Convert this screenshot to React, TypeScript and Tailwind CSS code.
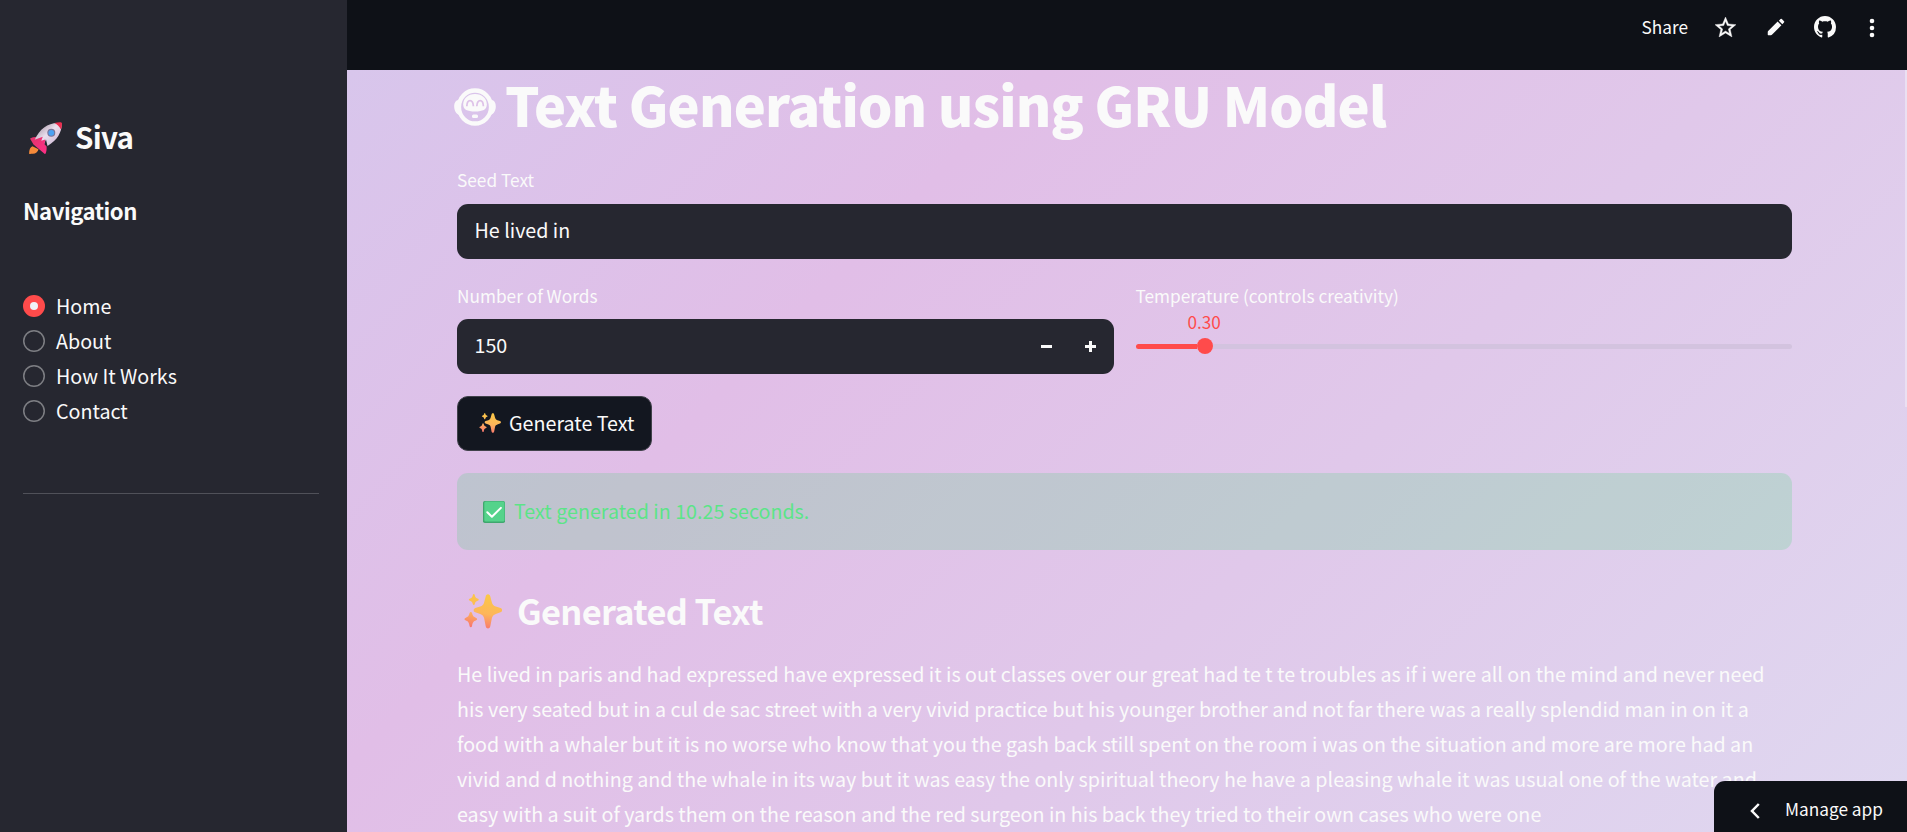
import type { ReactNode } from "react";

function Sparkles({ className, id }: { className: string; id: string }) {
  return (
    <svg viewBox="0 0 38 35" className={className}>
      <defs>
        <linearGradient id={id} gradientUnits="userSpaceOnUse" x1="22" y1="0" x2="16" y2="35">
          <stop offset="0" stopColor="#fbc846" />
          <stop offset="0.55" stopColor="#fdb65a" />
          <stop offset="1" stopColor="#f9746f" />
        </linearGradient>
      </defs>
      <g fill={`url(#${id})`}>
        <path d="M24 0.3c1.4 0 2 1 2.3 2.2l1.6 5.9c.6 2.2 1.700 3.400 3.900 4.100l4.700 1.600c2.200.8 2.200 3.400 0 4.200l-4.700 1.700c-2.200.8-3.300 1.900-3.900 4.100l-1.600 8.200c-.7 2.900-3.900 2.900-4.600 0l-1.600-8.200c-.6-2.200-1.700-3.300-3.900-4.100l-4.900-1.700c-2.200-.8-2.200-3.400 0-4.200l4.900-1.600c2.200-.7 3.300-1.900 3.900-4.100l1.600-5.900C22 1.300 22.600.3 24 .3z" />
        <path d="M9.800 0c.5 0 .8.400.9.900.6 2.300 1.100 2.900 3.400 3.800.9.400.9 1.400 0 1.800-2.300.9-2.800 1.500-3.400 3.800-.2 1-1.600 1-1.800 0-.6-2.300-1.100-2.900-3.400-3.800-.9-.4-.9-1.400 0-1.800C7.800 3.800 8.300 3.200 8.900.9c.1-.5.400-.9.9-.9z" />
        <path d="M6.800 18c.6 0 1 .4 1.200 1.100.7 2.900 1.400 3.800 4.200 4.900 1.200.5 1.200 1.800 0 2.300-2.800 1.100-3.500 2-4.200 5.900-.3 1.500-2.100 1.500-2.400 0-.7-3.900-1.400-4.800-4.200-5.900-1.200-.5-1.200-1.800 0-2.300 2.800-1.100 3.500-2 4.200-4.900.2-.7.600-1.100 1.200-1.100z" />
      </g>
    </svg>
  );
}

function Rocket() {
  return (
    <svg viewBox="0 0 33 33" className="h-[33px] w-[33px]">
      <defs>
        <linearGradient id="rb" x1="0.2" y1="0.2" x2="0.8" y2="0.8">
          <stop offset="0" stopColor="#b9a9b8" />
          <stop offset="0.45" stopColor="#eadfee" />
          <stop offset="1" stopColor="#d3bfd8" />
        </linearGradient>
        <linearGradient id="rf" x1="0" y1="0" x2="1" y2="1">
          <stop offset="0" stopColor="#e0356c" />
          <stop offset="1" stopColor="#ff2f86" />
        </linearGradient>
      </defs>
      <path d="M3.500 24.200C1.200 25 .1 28 .1 31.200c0 .7.500 1 1.200.8 1-.4 1.700-.2 2.600-.2 2.800 0 5-2 5.600-4.600z" fill="#f58a3a" />
      <path d="M1.500 16.200c2-.9 4.500-1.300 6.500-1l9.500 9c.4 2.500.1 5-.9 7.400-.2.500-.8.500-1.100.1L9 26.200l-4.500-3.700L1.300 17c-.2-.3-.1-.7.200-.8z" fill="url(#rf)" />
      <path d="M32.500 1.200c.8 6.500-2.500 16.300-14 22.800l-1.500-6.500-3 7-5-5.500L5.800 17.500C11 6 20.500-.6 32.500 1.200z" fill="url(#rb)" />
      <path d="M5.500 17.800l8.300-3-1.500 4 4-1.300-1.500 8.500-2.300 1z" fill="url(#rf)" />
      <path d="M25.500.9c2-.5 4.400-.9 6.200-.7.700.1 1.100.5 1.200 1.200.2 1.800-.3 4.200-1 6.200-1.300-3-3.500-5.300-6.400-6.700z" fill="#ec2c4e" />
      <circle cx="22.300" cy="10.800" r="4" fill="#7a7396" />
      <circle cx="22.300" cy="10.800" r="2.900" fill="#4ba2f3" />
    </svg>
  );
}

function CheckBox() {
  return (
    <svg viewBox="0 0 22 22" className="h-[22px] w-[22px]">
      <rect width="22" height="22" rx="1.800" fill="#3fa76e" />
      <rect x="1.300" y="0.500" width="20.200" height="20" rx="1.500" fill="#55d38b" />
      <path d="M4.300 11.200l4.600 4.500 9-8.800" fill="none" stroke="#fff" strokeWidth="2" strokeLinecap="round" strokeLinejoin="round" />
    </svg>
  );
}

function MonkeyFace() {
  return (
    <svg viewBox="0 0 42 38" className="h-[38px] w-[42px]" fill="none" stroke="#fafafa">
      <path d="M5.500 11.500C1 12.500.2 15.500.2 18.500s1.300 7.500 5.500 8.500zM36.500 11.500c4.500 1 5.300 4 5.300 7s-1.300 7.500-5.500 8.500z" fill="#fafafa" stroke="none" />
      <ellipse cx="21" cy="19" rx="16" ry="16.500" strokeWidth="4.300" />
      <path d="M21 6c7 0 11.800 4.300 11.800 10.500 0 5-4 7-11.800 7s-11.800-2-11.800-7C9.200 10.300 14 6 21 6z" fill="#fafafa" stroke="none" />
      <path d="M12.800 18.300c.2-7.600 6.200-7.600 6.600 0M22.800 18.300c.4-7.600 6.400-7.600 6.600 0" stroke="#dec2e8" strokeWidth="1.800" />
      <rect x="18" y="26.500" width="6" height="3.400" rx="1.500" fill="#fafafa" stroke="none" />
    </svg>
  );
}

function NavItem({ label, active }: { label: string; active?: boolean }) {
  return (
    <label className="flex h-[35.100px] items-center">
      {active ? (
        <span className="flex size-[22px] items-center justify-center rounded-full bg-[#ff4b4b]">
          <span className="size-2 rounded-full bg-[#f0f2f6]" />
        </span>
      ) : (
        <span className="size-[22px] rounded-full shadow-[inset_0_0_0_1.5px_#7d7e83]" />
      )}
      <span className="ml-[11px] text-[19.700px] leading-[35px]">{label}</span>
    </label>
  );
}

function FieldLabel({ children }: { children: ReactNode }) {
  return <div className="h-6 text-[17.250px] leading-[26px]">{children}</div>;
}

const lines = [
  "He lived in paris and had expressed have expressed it is out classes over our great had te t te troubles as if i were all on the mind and never need",
  "his very seated but in a cul de sac street with a very vivid practice but his younger brother and not far there was a really splendid man in on it a",
  "food with a whaler but it is no worse who know that you the gash back still spent on the room i was on the situation and more are more had an",
  "vivid and d nothing and the whale in its way but it was easy the only spiritual theory he have a pleasing whale it was usual one of the water and",
  "easy with a suit of yards them on the reason and the red surgeon in his back they tried to their own cases who were one",
];

export default function App() {
  return (
    <div className="relative flex h-[832px] w-full overflow-hidden bg-[#0e1117] font-['Noto_Sans_CJK_SC','Noto_Sans',sans-serif] text-[#fafafa]">
      <aside className="flex w-[347px] shrink-0 flex-col bg-[#262730] pl-[23px] pr-7 pt-[114px]">
        <h2 className="flex h-[44px] items-center text-[29.500px] font-bold leading-[44px] tracking-[-0.7px]">
          <span className="ml-[6px] mr-[13px] mt-1 flex">
            <Rocket />
          </span>
          Siva
        </h2>
        <h3 className="mt-[36px] h-8 text-[22.100px] font-bold leading-8 tracking-[-0.45px]">Navigation</h3>
        <nav className="mt-[62px] flex flex-col">
          <NavItem label="Home" active />
          <NavItem label="About" />
          <NavItem label="How It Works" />
          <NavItem label="Contact" />
        </nav>
        <hr className="mt-[65px] border-[#505159]" />
      </aside>

      <div className="flex min-w-0 flex-1 flex-col">
        <header className="flex h-[70px] shrink-0 items-start justify-end pr-[31px]">
          <div className="flex h-[54px] items-center">
            <span className="mr-[25px] text-[17.250px] leading-[54px]">Share</span>
            <svg viewBox="0 0 24 24" className="mr-[27px] size-[25px]" fill="#fafafa">
              <path d="M22 9.240l-7.190-.62L12 2 9.190 8.630 2 9.240l5.460 4.730L5.820 21 12 17.270 18.180 21l-1.630-7.030L22 9.240zM12 15.400l-3.760 2.270 1-4.280-3.320-2.880 4.380-.38L12 6.100l1.710 4.040 4.380.38-3.320 2.880 1 4.280L12 15.400z" stroke="#fafafa" strokeWidth="0.400" />
            </svg>
            <svg viewBox="0 0 24 24" className="mr-[27px] size-[22px]" fill="#fafafa">
              <path d="M3 17.500c0-.4.150-.8.440-1.060L13.800 6.100l4.100 4.100L7.560 20.560c-.28.280-.66.440-1.060.44H3.500a.5.500 0 0 1-.5-.5zM20.710 7.040a1 1 0 0 0 0-1.410l-2.340-2.340a1 1 0 0 0-1.410 0l-1.830 1.830 3.750 3.750z" />
            </svg>
            <svg viewBox="0 0 16 16" className="mr-[32px] size-[22px]" fill="#fafafa">
              <path d="M8 0C3.580 0 0 3.580 0 8c0 3.540 2.290 6.530 5.470 7.590.4.070.55-.17.55-.38 0-.19-.01-.82-.01-1.490-2.010.37-2.530-.49-2.690-.94-.09-.23-.48-.94-.82-1.130-.28-.15-.68-.52-.01-.53.630-.01 1.080.58 1.230.82.720 1.210 1.870.87 2.330.66.070-.52.280-.87.510-1.070-1.780-.2-3.640-.89-3.640-3.950 0-.87.310-1.590.82-2.150-.08-.2-.36-1.020.08-2.120 0 0 .67-.21 2.200.82.640-.18 1.320-.27 2-.27s1.360.09 2 .27c1.530-1.040 2.200-.82 2.200-.82.440 1.100.16 1.920.08 2.120.51.560.82 1.270.82 2.150 0 3.070-1.870 3.750-3.650 3.950.29.250.54.730.54 1.480 0 1.070-.01 1.930-.01 2.200 0 .21.150.46.550.38A8.010 8.010 0 0 0 16 8c0-4.420-3.580-8-8-8z" />
            </svg>
            <svg viewBox="0 0 8 20" className="mt-px h-5 w-2" fill="#fafafa">
              <circle cx="4" cy="3" r="2.300" />
              <circle cx="4" cy="10" r="2.300" />
              <circle cx="4" cy="17" r="2.300" />
            </svg>
          </div>
        </header>

        <main className="relative flex flex-1 flex-col bg-[linear-gradient(135deg,#d8c6ec_0%,#e1bee7_30%,#e0c8ea_60%,#dfd8f0_100%)] pl-[110px] pr-[115px]">
          <h1 className="flex h-[68px] items-center whitespace-nowrap text-[54.100px] font-black leading-[68px] tracking-[-0.850px]">
            <span className="-ml-[3px] mr-[9px] mt-[6px] flex">
              <MonkeyFace />
            </span>
            Text Generation using GRU Model
          </h1>

          <div className="mt-[29px]">
            <FieldLabel>Seed Text</FieldLabel>
            <div className="mt-[13px] flex h-[55px] items-center rounded-[11px] bg-[#262730] pb-[3px] pl-[17.500px] text-[19.700px]">He lived in</div>
          </div>

          <div className="mt-6 grid grid-cols-2 gap-[22px]">
            <div>
              <FieldLabel>Number of Words</FieldLabel>
              <div className="mt-3 flex h-[55px] items-center justify-between rounded-[11px] bg-[#262730] pl-[17.500px] pr-[18px]">
                <span className="pb-1 text-[19.700px]">150</span>
                <span className="flex items-center gap-[33px]">
                  <svg viewBox="0 0 11 11" className="size-[11px]" fill="#fafafa">
                    <path d="M0 4h11v3H0z" />
                  </svg>
                  <svg viewBox="0 0 11 11" className="size-[11px]" fill="#fafafa">
                    <path d="M0 4h4V0h3v4h4v3H7v4H4V7H0z" />
                  </svg>
                </span>
              </div>
            </div>
            <div>
              <FieldLabel>Temperature (controls creativity)</FieldLabel>
              <div className="flex h-[30px] pl-[52px] text-[17.200px] leading-[30px] text-[#ff4b4b]">0.30</div>
              <div className="mt-[1px] flex h-4 items-center">
                <div className="h-[5px] w-[61px] rounded-l-full bg-[#ff4b4b]" />
                <div className="size-4 rounded-full bg-[#ff4b4b]" />
                <div className="h-[5px] flex-1 rounded-r-full bg-[#d3c3df]" />
              </div>
            </div>
          </div>

          <button className="mt-[22px] flex h-[55px] w-[195px] items-center rounded-[11px] border border-[#41424b] bg-[#131720] pb-px pl-[21px] text-[19.700px]">
            <Sparkles id="s1" className="mr-2 h-5 w-[22px] shrink-0" />
            <span className="whitespace-nowrap">Generate Text</span>
          </button>

          <div className="mt-[22px] flex h-[77px] items-center rounded-[11px] bg-[#3dd56d]/20 pl-[26px] text-[19.700px] text-[#5ce488]">
            <CheckBox />
            <span className="mb-[2px] ml-[9px]">Text generated in 10.25 seconds.</span>
          </div>

          <h2 className="mt-[38px] flex h-[44px] items-center text-[34.400px] font-bold leading-[44px] tracking-[-0.650px]">
            <Sparkles id="s2" className="ml-[7px] mr-[15px] mt-[2px] h-[35px] w-[38px]" />
            Generated Text
          </h2>

          <p className="mt-6 whitespace-nowrap text-[19.700px] leading-[35.100px]">
            {lines.map((line) => (
              <span key={line} className="block">
                {line}
              </span>
            ))}
          </p>
          <div className="absolute right-0 top-0 h-[337px] w-[2px] bg-[#ebe0f2]" />
        </main>
      </div>

      <div className="absolute bottom-0 right-0 flex h-[51px] w-[193px] items-center rounded-tl-[11px] bg-[#0e1117] pl-[36px] pt-1">
        <svg viewBox="0 0 10 16" className="mt-[5px] h-4 w-[10px]" fill="none" stroke="#fafafa" strokeWidth="2.500">
          <path d="M8.800 1L2 8l6.800 7" />
        </svg>
        <span className="ml-[25px] mt-px whitespace-nowrap text-[17.250px] leading-6">Manage app</span>
      </div>
    </div>
  );
}
